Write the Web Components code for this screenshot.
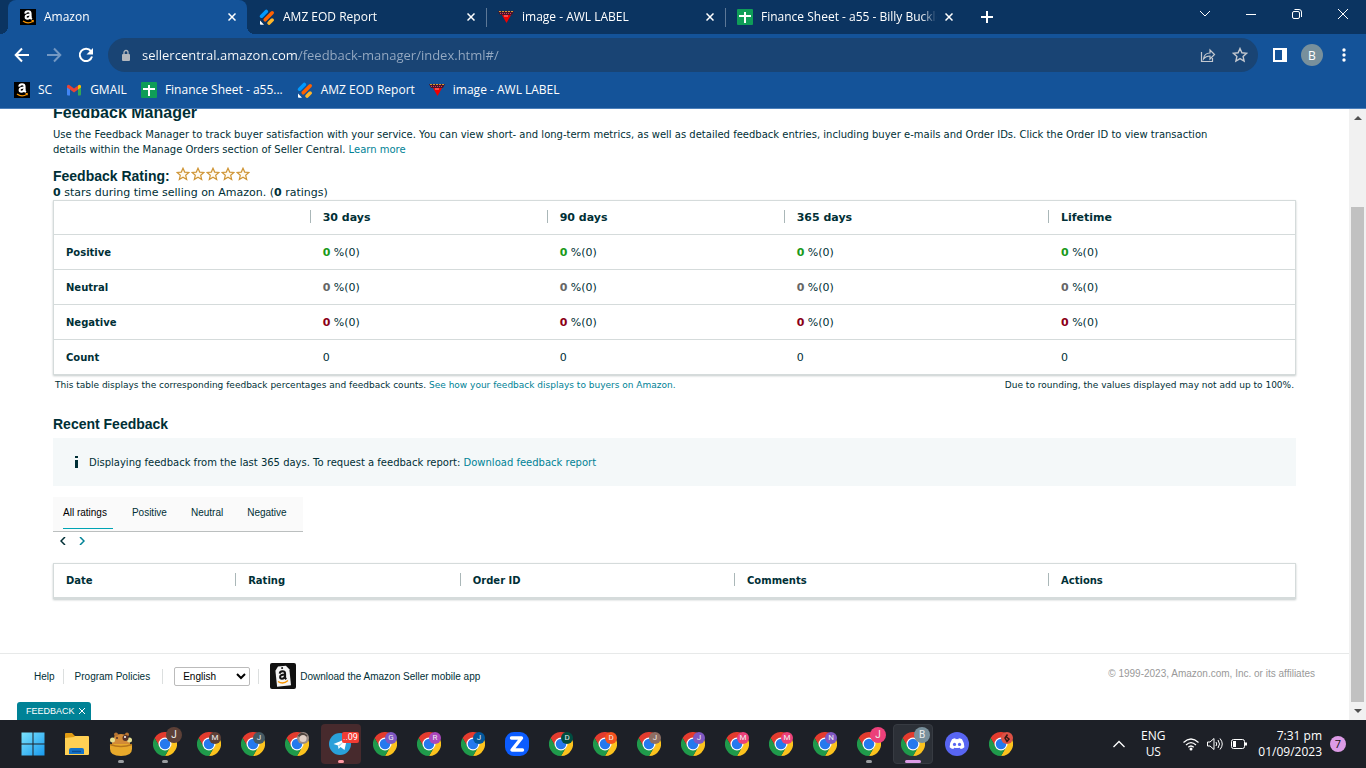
<!DOCTYPE html>
<html lang="en">
<head>
<meta charset="utf-8">
<title>Amazon</title>
<style>
html, body { margin: 0; height: 100%; }
body { display: flex; flex-direction: column; overflow: hidden; font-family: "Open Sans", "Noto Sans", sans-serif; font-size: 12px; background: #fff; }
feedback-page { flex: 1; min-height: 0; }
</style>
</head>
<body>
<tab-strip>
  <browser-tab icon="amazon" active>Amazon</browser-tab>
  <browser-tab icon="jot">AMZ EOD Report</browser-tab>
  <browser-tab icon="awl" line>image - AWL LABEL</browser-tab>
  <browser-tab icon="sheet" line>Finance Sheet - a55 - Billy Buckles</browser-tab>
</tab-strip>
<address-bar></address-bar>
<bookmark-bar>
  <book-mark icon="amazon">SC</book-mark>
  <book-mark icon="gmail">GMAIL</book-mark>
  <book-mark icon="sheet">Finance Sheet - a55...</book-mark>
  <book-mark icon="jot">AMZ EOD Report</book-mark>
  <book-mark icon="awl">image - AWL LABEL</book-mark>
</bookmark-bar>
<feedback-page></feedback-page>
<task-bar>
  <task-app icon="windows" label="Start"></task-app>
  <task-app icon="folder" label="File Explorer"></task-app>
  <task-app icon="hippo" label="Time tracker" running></task-app>
  <task-app icon="chrome" label="Chrome" badge="J" tint="#5d4037" large running></task-app>
  <task-app icon="chrome" label="Chrome" badge="M" tint="#5d4037"></task-app>
  <task-app icon="chrome" label="Chrome" badge="J" tint="#455a64"></task-app>
  <task-app icon="chromephoto" label="Chrome"></task-app>
  <task-app icon="telegram" label="Telegram" count="..09" alert></task-app>
  <task-app icon="chrome" label="Chrome" badge="G" tint="#7e57c2"></task-app>
  <task-app icon="chrome" label="Chrome" badge="R" tint="#ab47bc"></task-app>
  <task-app icon="chrome" label="Chrome" badge="J" tint="#01579b"></task-app>
  <task-app icon="zoom" label="Zoom"></task-app>
  <task-app icon="chrome" label="Chrome" badge="D" tint="#004d40"></task-app>
  <task-app icon="chrome" label="Chrome" badge="D" tint="#f4511e"></task-app>
  <task-app icon="chrome" label="Chrome" badge="J" tint="#8d6e63"></task-app>
  <task-app icon="chrome" label="Chrome" badge="J" tint="#7e57c2"></task-app>
  <task-app icon="chrome" label="Chrome" badge="M" tint="#ec407a"></task-app>
  <task-app icon="chrome" label="Chrome" badge="M" tint="#ec407a"></task-app>
  <task-app icon="chrome" label="Chrome" badge="N" tint="#7e57c2"></task-app>
  <task-app icon="chrome" label="Chrome" badge="J" tint="#ec407a" large running></task-app>
  <task-app icon="chrome" label="Chrome" badge="B" tint="#78909c" large current></task-app>
  <task-app icon="discord" label="Discord"></task-app>
  <task-app icon="chromered" label="Chrome"></task-app>
</task-bar>

<script>
const svg = (w, h, box, body) => `<svg width="${w}" height="${h}" viewBox="${box}" fill="none" aria-hidden="true">${body}</svg>`;
const stroke = (d, w = 1, c = 'currentColor') => `<path d="${d}" stroke="${c}" stroke-width="${w}"/>`;
const aMark = c => `<g stroke="${c}" stroke-width="2"><path d="M5.200 4.700Q5.500 2.300 8 2.300q2.600 0 2.600 2.400v3.500q0 1 1.200 2"/><path d="M10.600 5.600Q5.600 5.500 5.600 8q0 1.700 1.800 1.700 2.400 0 3.200-2.600"/></g>`;
const chromeBody = '<path d="M3.200 12A24 24 0 0 1 44.800 12H24A12 12 0 0 0 13.600 30Z" fill="#e33b2e"/><path d="M44.800 12A24 24 0 0 1 24 48L34.400 30A12 12 0 0 0 24 12Z" fill="#fcc31e"/><path d="M24 48A24 24 0 0 1 3.200 12L13.600 30A12 12 0 0 0 34.400 30Z" fill="#1f9a4b"/><circle cx="24" cy="24" r="13" fill="#fff"/><circle cx="24" cy="24" r="10.500" fill="#2579ee"/>';
const ICONS = {
  amazon: svg(16, 16, '0 0 16 16', '<path d="M0 0h16v16H0z" fill="#000"/>' + aMark('#fff') + '<path d="M3 12c3 2.200 7 2.200 10 .2" stroke="#f79400" stroke-width="1.300"/><path d="M11.500 11.600l2-.2-.4 1.900" stroke="#f79400"/>'),
  jot: svg(16, 16, '0 0 16 16', '<g stroke-linecap="round"><path d="M2.600 7.200l4.700-4.700" stroke="#0099ff" stroke-width="3.600"/><path d="M6.200 10.800l7-7" stroke="#ff6100" stroke-width="3.600"/><path d="M10.100 14.100l3-3" stroke="#ffb629" stroke-width="3.600"/></g><path d="M1 11.500l4 4.200H1.800Q1 15.700 1 15z" fill="#fff"/>'),
  awl: svg(16, 16, '0 0 16 16', '<path d="M4 6h9l-4.500 8z" fill="#f00000"/><path d="M0 2h16l-2 4H2z" fill="#4a1528"/><path d="M1 2.500h14" stroke="#d49a35" stroke-dasharray="2 1"/><path d="M2 4.500h12" stroke="#ce3b65" stroke-dasharray="1 1"/><path d="M6 7h4" stroke="#ff9a9a"/>'),
  sheet: svg(16, 16, '0 0 16 16', '<rect width="16" height="16" rx="1" fill="#0f9d58"/><path d="M7 3h2v3h5v2H9v6H7V8H2V6h5z" fill="#fff"/>'),
  gmail: svg(16, 12, '-1 -.500 16 12', '<path d="M0 2v8q0 1 1 1h2V4z" fill="#4285f4"/><path d="M14 2v8q0 1-1 1h-2V4z" fill="#34a853"/><path d="M11 1v4l3-2V1.500Q13-.5 11 1z" fill="#fbbc04"/><path d="M0 1.500Q1-.5 3 1l4 3 4-3v4L7 8 3 5 0 3z" fill="#ea4335"/>'),
  close: svg(8, 8, '0 0 8 8', stroke('M.5 .5l7 7M7.500 .5L.5 7.500', 1.500)),
  plus: svg(12, 12, '0 0 12 12', stroke('M6 0v12M0 6h12', 2)),
  down: svg(12, 8, '0 0 12 8', stroke('M1 1l5 5 5-5')),
  minus: svg(10, 10, '0 0 10 10', stroke('M0 5.500h10')),
  restore: svg(12, 12, '0 0 12 12', '<rect x="1.500" y="3.500" width="7" height="7" rx="1.500" stroke="currentColor"/>' + stroke('M3.500 1.500H8Q10.500 1.500 10.500 4v5')),
  winclose: svg(12, 12, '0 0 12 12', stroke('M1 1l10 10M11 1L1 11')),
  back: svg(16, 16, '0 0 16 16', stroke('M15 8H2M8 1.500L1.700 8 8 14.500', 2)),
  forward: svg(16, 16, '0 0 16 16', stroke('M1 8h13M8 1.500L14.300 8 8 14.500', 2)),
  reload: svg(16, 16, '0 0 16 16', stroke('M13 4.200A6.200 6.200 0 1 0 14 9.500', 2) + '<path d="M15 1v6.500H8.500z" fill="currentColor"/>'),
  lock: svg(10, 13, '0 0 10 13', '<rect x="1" y="5" width="8" height="7" rx="1" fill="#b3b7bd"/><path d="M3 5V3.500a2 2 0 0 1 4 0V5" stroke="#b3b7bd" stroke-width="1.300"/>'),
  share: svg(16, 16, '0 0 16 16', stroke('M1.500 5v9.500h11V11M3.500 12c.5-4 3-6 6.500-6V3l4.500 4.500L10 12V9C7 9 5 10 3.500 12z', 1.200)),
  star: svg(16, 16, '0 0 16 16', '<path d="M8 1.500l1.900 4.300 4.700.5-3.500 3.100 1 4.600L8 11.600 3.900 14l1-4.600L1.400 6.300l4.700-.5z" stroke="currentColor" stroke-width="1.400"/>'),
  panel: svg(14, 14, '0 0 14 14', '<path d="M0 0h14v14H0zM2 2v10h7V2z" fill="#fff" fill-rule="evenodd"/>'),
  dots: svg(4, 14, '0 0 4 14', '<g fill="#fff"><circle cx="2" cy="2" r="1.700"/><circle cx="2" cy="7" r="1.700"/><circle cx="2" cy="12" r="1.700"/></g>'),
  rate: svg(14, 14, '0 0 14 14', '<path d="M7 1.200l1.700 3.900 4.200.4-3.200 2.800 1 4.200L7 10.300l-3.700 2.200 1-4.200L1.100 5.500l4.200-.4z" fill="#fffaf0" stroke="#cf9434" stroke-width="1.200"/>'),
  info: svg(4, 12, '0 0 4 12', '<path d="M0 0h3v2H0zM0 4h3v8H0z" fill="#002f36"/>'),
  left: svg(6, 8, '0 0 6 8', stroke('M5 0L1 4l4 4', 1.500)),
  right: svg(6, 8, '0 0 6 8', stroke('M1 0l4 4-4 4', 1.500)),
  select: svg(10, 7, '0 0 10 7', stroke('M1 1l4 4 4-4', 2)),
  thinx: svg(8, 8, '0 0 8 8', stroke('M1 1l6 6M7 1L1 7')),
  seller: svg(26, 26, '0 0 26 26', '<rect width="26" height="26" rx="2" fill="#111"/><g transform="rotate(-6 13 13)"><path d="M6 7l3-4h8l3 4v16H6z" fill="#f5f5f5"/><circle cx="13" cy="5" r="1" fill="#222"/></g><g transform="translate(4.500 6)">' + aMark('#111') + '</g><path d="M8 18.500q5 3.500 10-1" stroke="#f79400" stroke-width="1.400"/>'),
  arrowup: svg(8, 5, '0 0 8 5', '<path d="M4 0l4 4H0z" fill="#505050"/>'),
  arrowdown: svg(8, 5, '0 0 8 5', '<path d="M4 4l4-4H0z" fill="#505050"/>'),
  windows: svg(24, 24, '0 0 24 24', '<linearGradient id="w" x2="1" y2="1"><stop stop-color="#7be3fc"/><stop offset="1" stop-color="#1899ee"/></linearGradient><path d="M0.500 0.500h11v11h-11zM12.500 0.500h11v11h-11zM0.500 12.500h11v11h-11zM12.500 12.500h11v11h-11z" fill="url(#w)"/>'),
  folder: svg(24, 22, '0 0 24 22', '<path d="M0 1q0-1 1-1h6l3 3h8v4H0z" fill="#e09b12"/><path d="M0 5l9-1 1-1h13q1 0 1 1v17q0 1-1 1H0z" fill="#ffd054"/><path d="M4 21v-4q0-2 2-2h11q2 0 2 2v4z" fill="#1372c9"/><path d="M7 18.500h9" stroke="#0a4d94" stroke-width="1.500"/>'),
  hippo: svg(24, 24, '0 0 24 24', '<path d="M3 11Q4 2 12 2t9 9v3H3z" fill="#d28a37"/><circle cx="7" cy="2.500" r="2" fill="#b87431"/><circle cx="18" cy="2.500" r="2" fill="#b87431"/><circle cx="3.500" cy="8" r="2.500" fill="#e5df92"/><circle cx="20.500" cy="8" r="2.500" fill="#e5df92"/><circle cx="16.500" cy="6" r="3" fill="#53312b"/><circle cx="16" cy="5" r="1" fill="#fff"/><circle cx="8" cy="6" r="1" fill="#53312b"/><path d="M1 12h22v5q0 7-11 7T1 17z" fill="#e8a92b"/><path d="M1 12.500q11 4 22 0" stroke="#b5751d" stroke-width="1.500"/>'),
  chrome: svg(24, 24, '0 0 48 48', chromeBody),
  chromephoto: svg(24, 24, '0 0 48 48', chromeBody + '<circle cx="36" cy="12" r="12" fill="#9b8c86"/><path d="M25 8q8-12 20-1l-6 6z" fill="#4f443f"/><circle cx="36" cy="13" r="7" fill="#e0cfc6"/>'),
  chromered: svg(24, 24, '0 0 48 48', chromeBody + '<circle cx="36" cy="12" r="12" fill="#dc5145"/><path d="M37 5l-5 7 4 7 4-5-5-4" stroke="#301916" stroke-width="3"/>'),
  telegram: svg(24, 24, '0 0 24 24', '<circle cx="11" cy="12" r="11" fill="#29a0da"/><path d="M4.500 12L18 6.500 15.500 18l-4-3-2 2-.5-3.500z" fill="#fff"/><path d="M9 13.500L15.500 8.800 10.500 14.500z" fill="#a9d8ef"/>'),
  zoom: svg(24, 24, '0 0 24 24', '<rect width="24" height="24" rx="9" fill="#0b5cff"/><path d="M6.500 6h10L7 18h10.500" stroke="#fff" stroke-width="3.400" stroke-linejoin="round" stroke-linecap="round"/>'),
  discord: svg(24, 24, '0 0 24 24', '<circle cx="12" cy="12" r="12" fill="#5865f2"/><path d="M7 7.300Q9 6.200 10.200 6.200l.5 1q1.300-.2 2.600 0l.5-1q1.500 0 3.200 1.100Q19.500 11 19.400 15.300q-1.800 1.500-3.700 1.800l-.9-1.400q-2.800.8-5.600 0l-.9 1.400q-2-.4-3.700-1.800Q4.500 11 7 7.300z" fill="#fff"/><circle cx="9.500" cy="12.400" r="1.600" fill="#5865f2"/><circle cx="14.500" cy="12.400" r="1.600" fill="#5865f2"/>'),
  trayup: svg(12, 8, '0 0 12 8', stroke('M0.500 7L6 1.500 11.500 7', 1.300)),
  wifi: svg(16, 14, '0 0 16 14', '<g stroke="#fff" stroke-width="1.200"><path d="M.5 5.500q7.500-7 15 0M3 8q5-4.800 10 0M5.300 10.300q2.700-2.600 5.400 0"/></g><circle cx="8" cy="12" r="1.500" fill="#fff"/>'),
  volume: svg(16, 14, '0 0 16 14', '<g stroke="#fff"><path d="M.5 5h2.500L7 1.500v11L3 9H.5z"/><path d="M9 5q1.500 2 0 4M11 3q3 4 0 8M13 1.500q4.500 5.500 0 11"/></g>'),
  battery: svg(16, 10, '0 0 16 10', '<rect x=".5" y=".5" width="13" height="9" rx="2" stroke="#fff"/><path d="M2 2h3v6H2zM14 3.500h2v3h-2z" fill="#fff"/>')
};

function define(name, render) {
  customElements.define(name, class extends HTMLElement {
    connectedCallback() {
      if (this.shadowRoot) return;
      const t = document.createElement('template');
      t.innerHTML = `<style>:host,*{box-sizing:border-box}svg{display:block;flex:none}button{border:0;padding:0;margin:0;background:none;color:inherit;font:inherit;display:grid;place-items:center}a{color:inherit;text-decoration:none}</style>` + render(this);
      this.attachShadow({ mode: 'open' }).append(t.content.cloneNode(true));
    }
  });
}

define('tab-strip', () => `
<style>
:host{display:flex;height:34px;flex:none;background:#0b3461;color:#fff;padding-left:8px}
.plus{width:46px}
.win{margin-left:auto;display:flex;height:28px}
.win button{width:46px}
</style>
<slot></slot>
<button class="plus" aria-label="New tab">${ICONS.plus}</button>
<div class="win">
<button aria-label="Search tabs">${ICONS.down}</button>
<button aria-label="Minimise">${ICONS.minus}</button>
<button aria-label="Restore">${ICONS.restore}</button>
<button aria-label="Close window">${ICONS.winclose}</button>
</div>`);

define('browser-tab', el => `
<style>
:host{display:flex;align-items:center;flex:0 1 239px;min-width:0;padding:0 11px 0 12px;gap:8px;position:relative}
:host([active]){background:#145399;border-radius:8px 8px 0 0}
:host([active])::before,:host([active])::after{content:"";position:absolute;bottom:0;width:8px;height:8px}
:host([active])::before{right:100%;background:radial-gradient(circle at 0 0,transparent 8px,#145399 8px)}
:host([active])::after{left:100%;background:radial-gradient(circle at 100% 0,transparent 8px,#145399 8px)}
:host([line])::before{content:"";position:absolute;left:0;top:8px;height:19px;width:1px;background:#5d7897}
.t{flex:1;min-width:0;overflow:hidden;white-space:nowrap;line-height:18px;-webkit-mask:linear-gradient(90deg,#000 calc(100% - 16px),transparent)}
</style>
${ICONS[el.getAttribute('icon')]}<span class="t"><slot></slot></span>
<button aria-label="Close tab">${ICONS.close}</button>`);

define('address-bar', () => `
<style>
:host{display:flex;align-items:center;height:42px;flex:none;background:#145399;color:#fff;padding:0 6px}
button{width:32px;height:32px}
.off{color:#7398c3}
.box{flex:1;height:34px;border-radius:17px;background:#194474;display:flex;align-items:center;margin:0 6px;padding:0 2px 0 13px;color:#c3c8cf}
input{flex:1;min-width:0;border:0;outline:0;padding:0;margin-left:11px;height:24px;font:13px "Open Sans",sans-serif;color:#fff;-webkit-text-fill-color:transparent;background:linear-gradient(90deg,#fff 157px,#97abc3 157px);-webkit-background-clip:text;background-clip:text}
.av{width:22px;height:22px;border-radius:50%;background:#78909c;display:grid;place-items:center;color:#fff}
</style>
<button aria-label="Back">${ICONS.back}</button>
<button aria-label="Forward" class="off">${ICONS.forward}</button>
<button aria-label="Reload">${ICONS.reload}</button>
<div class="box">${ICONS.lock}<input aria-label="Address" value="sellercentral.amazon.com/feedback-manager/index.html#/">
<button aria-label="Share">${ICONS.share}</button><button aria-label="Bookmark">${ICONS.star}</button></div>
<button aria-label="Side panel">${ICONS.panel}</button>
<button aria-label="Profile"><span class="av">B</span></button>
<button aria-label="Menu">${ICONS.dots}</button>`);

define('bookmark-bar', () => `
<style>:host{display:flex;align-items:center;gap:14px;height:33px;flex:none;background:#145399;border-bottom:1px solid #4c7fba;padding:0 14px 4px;color:#fff}</style><slot></slot>`);

define('book-mark', el => `
<style>:host{display:block}a{display:flex;align-items:center;gap:8px;white-space:nowrap;line-height:18px}</style>
<a href="#">${ICONS[el.getAttribute('icon')]}<slot></slot></a>`);

const ratingRow = (name, tone) => `<tr><th scope="row">${name}</th>${`<td><b class="${tone}">0</b> %(0)</td>`.repeat(4)}</tr>`;
const tableStyle = `
table{width:100%;table-layout:fixed;border-collapse:separate;border-spacing:0;border:1px solid #d5dbdb;box-shadow:0 1px 2px #c4caca}
th,td{height:35px;padding:0 12px;text-align:left;border-top:1px solid #d5dbdb;line-height:15px}
th+th,td{padding-left:13px}
thead th{height:33px;border-top:0;position:relative}
thead th+th::before{content:"";position:absolute;left:0;top:9px;width:1px;height:13px;background:#aab7b8}`;

define('rating-table', () => `
<style>:host{display:block}${tableStyle}
thead th,td{font-size:11px}
.g{color:#1a9a1a}.n{color:#666}.r{color:#8b0016}
</style>
<table><colgroup><col style="width:20.600%"><col style="width:19.100%"><col style="width:19.100%"><col style="width:21.300%"><col style="width:19.900%"></colgroup>
<thead><tr><td></td><th scope="col">30 days</th><th scope="col">90 days</th><th scope="col">365 days</th><th scope="col">Lifetime</th></tr></thead>
<tbody>${ratingRow('Positive', 'g')}${ratingRow('Neutral', 'n')}${ratingRow('Negative', 'r')}
<tr><th scope="row">Count</th><td>0</td><td>0</td><td>0</td><td>0</td></tr></tbody></table>`.replace('<tr><td></td>', '<tr><th></th>'));

define('feedback-list', () => `
<style>:host{display:block}${tableStyle}
table{border-bottom:2px solid #d5dbdb}</style>
<table><colgroup><col style="width:14.600%"><col style="width:18.100%"><col style="width:22.100%"><col style="width:25.300%"><col style="width:19.900%"></colgroup>
<thead><tr><th scope="col">Date</th><th scope="col">Rating</th><th scope="col">Order ID</th><th scope="col">Comments</th><th scope="col">Actions</th></tr></thead></table>`);

define('page-scrollbar', () => `
<style>:host{display:flex;flex-direction:column;width:17px;flex:none;background:#f1f1f1}
button{height:18px;width:100%;flex:none}
.track{flex:1;padding:80px 2px 0;display:flex}
.thumb{flex:1;background:#c1c1c1}</style>
<button aria-label="Scroll up">${ICONS.arrowup}</button><div class="track"><div class="thumb"></div></div><button aria-label="Scroll down">${ICONS.arrowdown}</button>`);

define('feedback-page', () => `
<style>
:host{display:flex;overflow:hidden;color:#002f36;font:10px/15px "DejaVu Sans",Verdana,sans-serif}
.view{flex:1;min-width:0;display:flex;flex-direction:column;overflow:hidden}
main{padding:0 53px}
h1,h2{font-family:"Liberation Sans",Arial,sans-serif;margin:0}
h1{font-size:16px;line-height:20px;margin-top:-6px}
h2{font-size:14px;line-height:18px}
p{margin:0}
.intro{margin:4px 0 10px;padding-right:53px}
.sum{font-size:11px}
.link{color:#008296}
.head{display:flex;align-items:flex-start;gap:6px}
.stars{display:flex;gap:1px}
.notes{display:flex;justify-content:space-between;padding:3px 2px 0;margin-bottom:22px;font-size:9px}
.msg{display:flex;align-items:center;gap:10px;height:48px;background:#f4f8f9;padding:0 22px;margin:5px 0 11px}
nav{display:flex;width:250px;height:35px;background:#fafafa;border-bottom:1px solid #bbbfbf;padding:0 10px;gap:24px;font:10px/15px "Liberation Sans",Arial,sans-serif}
nav button{height:32px;border-bottom:1px solid transparent}
nav .on{color:#000;border-color:#00a4b4;padding-right:6px;margin-right:-5px}
.pager{display:flex;height:18px;padding-left:3px;gap:5px;margin-bottom:13px}
.pager button{width:14px}
page-footer{margin-top:auto}
</style>
<div class="view">
<main>
<h1>Feedback Manager</h1>
<p class="intro">Use the Feedback Manager to track buyer satisfaction with your service. You can view short- and long-term metrics, as well as detailed feedback entries, including buyer e-mails and Order IDs. Click the Order ID to view transaction details within the Manage Orders section of Seller Central. <a class="link" href="#">Learn more</a></p>
<div class="head"><h2>Feedback Rating:</h2><span class="stars" role="img" aria-label="0 of 5 stars">${ICONS.rate.repeat(5)}</span></div>
<p class="sum"><b>0</b> stars during time selling on Amazon. (<b>0</b> ratings)</p>
<rating-table></rating-table>
<div class="notes"><span>This table displays the corresponding feedback percentages and feedback counts. <a class="link" href="#">See how your feedback displays to buyers on Amazon.</a></span><span>Due to rounding, the values displayed may not add up to 100%.</span></div>
<h2>Recent Feedback</h2>
<div class="msg">${ICONS.info}<span>Displaying feedback from the last 365 days. To request a feedback report: <a class="link" href="#">Download feedback report</a></span></div>
<nav><button class="on">All ratings</button><button>Positive</button><button>Neutral</button><button>Negative</button></nav>
<div class="pager"><button aria-label="Previous">${ICONS.left}</button><button class="link" aria-label="Next">${ICONS.right}</button></div>
<feedback-list></feedback-list>
</main>
<page-footer></page-footer>
</div>
<page-scrollbar></page-scrollbar>`);

define('page-footer', () => `
<style>
:host{display:block;border-top:1px solid #e7e9e9;padding:9px 34px 0;font:10px/15px "Liberation Sans",Arial,sans-serif;color:#002f36}
.row{display:flex;align-items:center;height:26px;margin-bottom:13px}
i{width:1px;height:15px;background:#dcdfdf}
.h{margin-right:8px}.pol{margin:0 12px 0 11px}
.sel{position:relative;margin:0 8px 0 11px}
select{appearance:none;width:76px;height:19px;border:1px solid #bbb;border-radius:2px;background:#fff;color:#000;font:inherit;padding:0 8px;display:block}
.sel svg{position:absolute;right:4px;top:6px;color:#000;pointer-events:none}
.app{display:flex;align-items:center;gap:4px;margin-left:11px}
.copy{margin-left:auto;color:#999;padding-bottom:5px}
.dock{display:flex;align-items:center;gap:3px;height:18px;width:74px;margin-left:-17px;padding:0 0 0 9px;background:#008296;color:#fff;border-radius:3px 3px 0 0;font-size:9px}
</style>
<div class="row"><a class="h" href="#">Help</a><i></i><a class="pol" href="#">Program Policies</a><i></i>
<span class="sel"><select aria-label="Language"><option>English</option></select>${ICONS.select}</span><i></i>
<a class="app" href="#">${ICONS.seller}Download the Amazon Seller mobile app</a>
<span class="copy">© 1999-2023, Amazon.com, Inc. or its affiliates</span></div>
<div class="dock">FEEDBACK<button aria-label="Close feedback">${ICONS.thinx}</button></div>`);

define('task-bar', () => `
<style>
:host{display:flex;height:48px;flex:none;background:#1d2027;color:#fff;padding:0 20px 0 11px}
.tray{margin-left:auto;display:flex;align-items:center}
.lang{text-align:center;width:36px;margin:0 12px 0 10px}
.lang,.time{font-size:12px;line-height:16px}
.net{display:flex;gap:8px;align-items:center;width:64px}
.time{text-align:right;margin:0 8px 0 11px;white-space:nowrap}
.n{width:16px;height:16px;border-radius:50%;background:#dc9be6;color:#111;font-size:11px;line-height:16px;text-align:center}
</style>
<slot></slot>
<div class="tray"><button aria-label="Hidden icons">${ICONS.trayup}</button>
<div class="lang">ENG<br>US</div>
<button class="net" aria-label="Network, volume, battery">${ICONS.wifi}${ICONS.volume}${ICONS.battery}</button>
<div class="time">7:31 pm<br>01/09/2023</div><span class="n">7</span></div>`);

define('task-app', el => {
  const b = el.getAttribute('badge'), c = el.getAttribute('count');
  return `
<style>
:host{display:block;padding:4px 2px}
button{position:relative;width:40px;height:40px;border-radius:4px;border:1px solid transparent}
:host([alert]) button{background:#472a2d}
:host([current]) button{background:#2c3037;border-color:#373b42}
.b{position:absolute;left:19px;top:7px;width:12px;height:12px;border-radius:50%;font:8px/12px Roboto,sans-serif;color:#eee;text-align:center;background:${el.getAttribute('tint') || 'none'}}
:host([large]) .b{left:20px;top:2px;width:16px;height:16px;font-size:10px;line-height:16px}
.c{position:absolute;left:20px;top:7px;width:17px;height:11px;border-radius:2px;background:#f23c34;color:#fff;font:9px/11px Roboto,sans-serif;text-align:center}
.u{position:absolute;left:16px;bottom:0;width:6px;height:3px;border-radius:2px;background:#9a9da1}
:host([alert]) .u{background:#ff99a4}
:host([current]) .u{left:11px;width:16px;background:#dc9be6}
:host(:not([running]):not([alert]):not([current])) .u{display:none}
</style>
<button aria-label="${el.getAttribute('label')}">${ICONS[el.getAttribute('icon')]}${b ? `<span class="b">${b}</span>` : ''}${c ? `<span class="c">${c}</span>` : ''}<span class="u"></span></button>`;
});
</script>
</body>
</html>
